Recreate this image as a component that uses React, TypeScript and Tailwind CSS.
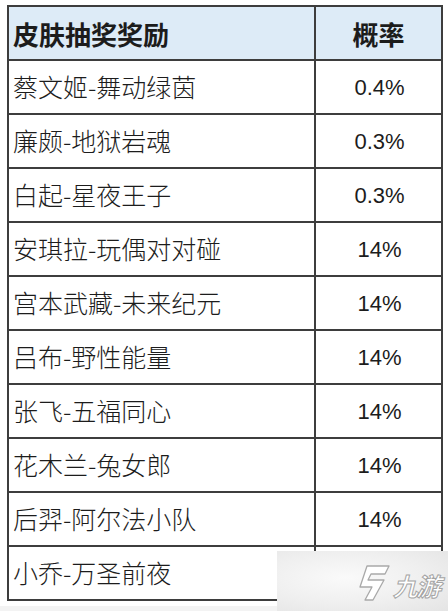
import React from "react"

const rows: [string, string][] = [
  ["蔡文姬-舞动绿茵", "0.4%"],
  ["廉颇-地狱岩魂", "0.3%"],
  ["白起-星夜王子", "0.3%"],
  ["安琪拉-玩偶对对碰", "14%"],
  ["宫本武藏-未来纪元", "14%"],
  ["吕布-野性能量", "14%"],
  ["张飞-五福同心", "14%"],
  ["花木兰-兔女郎", "14%"],
  ["后羿-阿尔法小队", "14%"],
  ["小乔-万圣前夜", ""],
]

const cjk = "font-['Microsoft_YaHei','Noto_Sans_CJK_SC',sans-serif]"

function Watermark() {
  return (
    <div className="absolute left-[277px] top-[551px] right-0 bottom-0 bg-[radial-gradient(ellipse_at_40%_45%,#fafafa_0%,#efefef_55%,#e4e4e4_100%)] flex items-center pl-[80px] gap-[2px]">
      <svg width="34" height="38" viewBox="0 0 34 38" className="mt-[4px] shrink-0">
        <path
          d="M10 2 L32 2 L28 10 L14 10 L11 16 L27 16 L16 36 L8 36 L15 23 L3 23 Z"
          fill="#ffffff"
          stroke="#a9a9a9"
          strokeWidth="1.3"
          strokeLinejoin="round"
        />
      </svg>
      <span
        className={`${cjk} text-[25px] font-bold italic text-white leading-none tracking-[-2px] whitespace-nowrap [-webkit-text-stroke:1px_#a5a5a5] mt-[8px]`}
      >
        九游
      </span>
    </div>
  )
}

export default function App() {
  return (
    <div className="relative w-[448px] h-[611px] bg-white overflow-hidden">
      <div className="pt-[5px] pl-[7px]">
        <div className={`w-[436px] border-t-2 border-l-2 border-r-2 border-[#3d3d3d] ${cjk} text-[#1c1c1c]`}>
          <div className="grid grid-cols-[305px_1fr] h-[54px] border-b-2 border-[#3d3d3d] bg-[#ddebf7]">
            <div className="flex items-center pl-[4px] text-[26px] font-bold">皮肤抽奖奖励</div>
            <div className="flex items-center justify-center border-l-2 border-[#3d3d3d] text-[26px] font-bold">概率</div>
          </div>
          {rows.map(([name, rate]) => (
            <div key={name} className="grid grid-cols-[305px_1fr] h-[54px] border-b-2 border-[#3d3d3d]">
              <div className="flex items-center pl-[4px] text-[25px] font-light">{name}</div>
              <div className="flex items-center justify-center border-l-2 border-[#3d3d3d] font-['Liberation_Sans',sans-serif] text-[22px] pl-[2px]">
                {rate}
              </div>
            </div>
          ))}
        </div>
      </div>
      <div className="absolute left-0 right-0 bottom-0 h-[5px] bg-[#f3f3f3]" />
      <Watermark />
    </div>
  )
}
